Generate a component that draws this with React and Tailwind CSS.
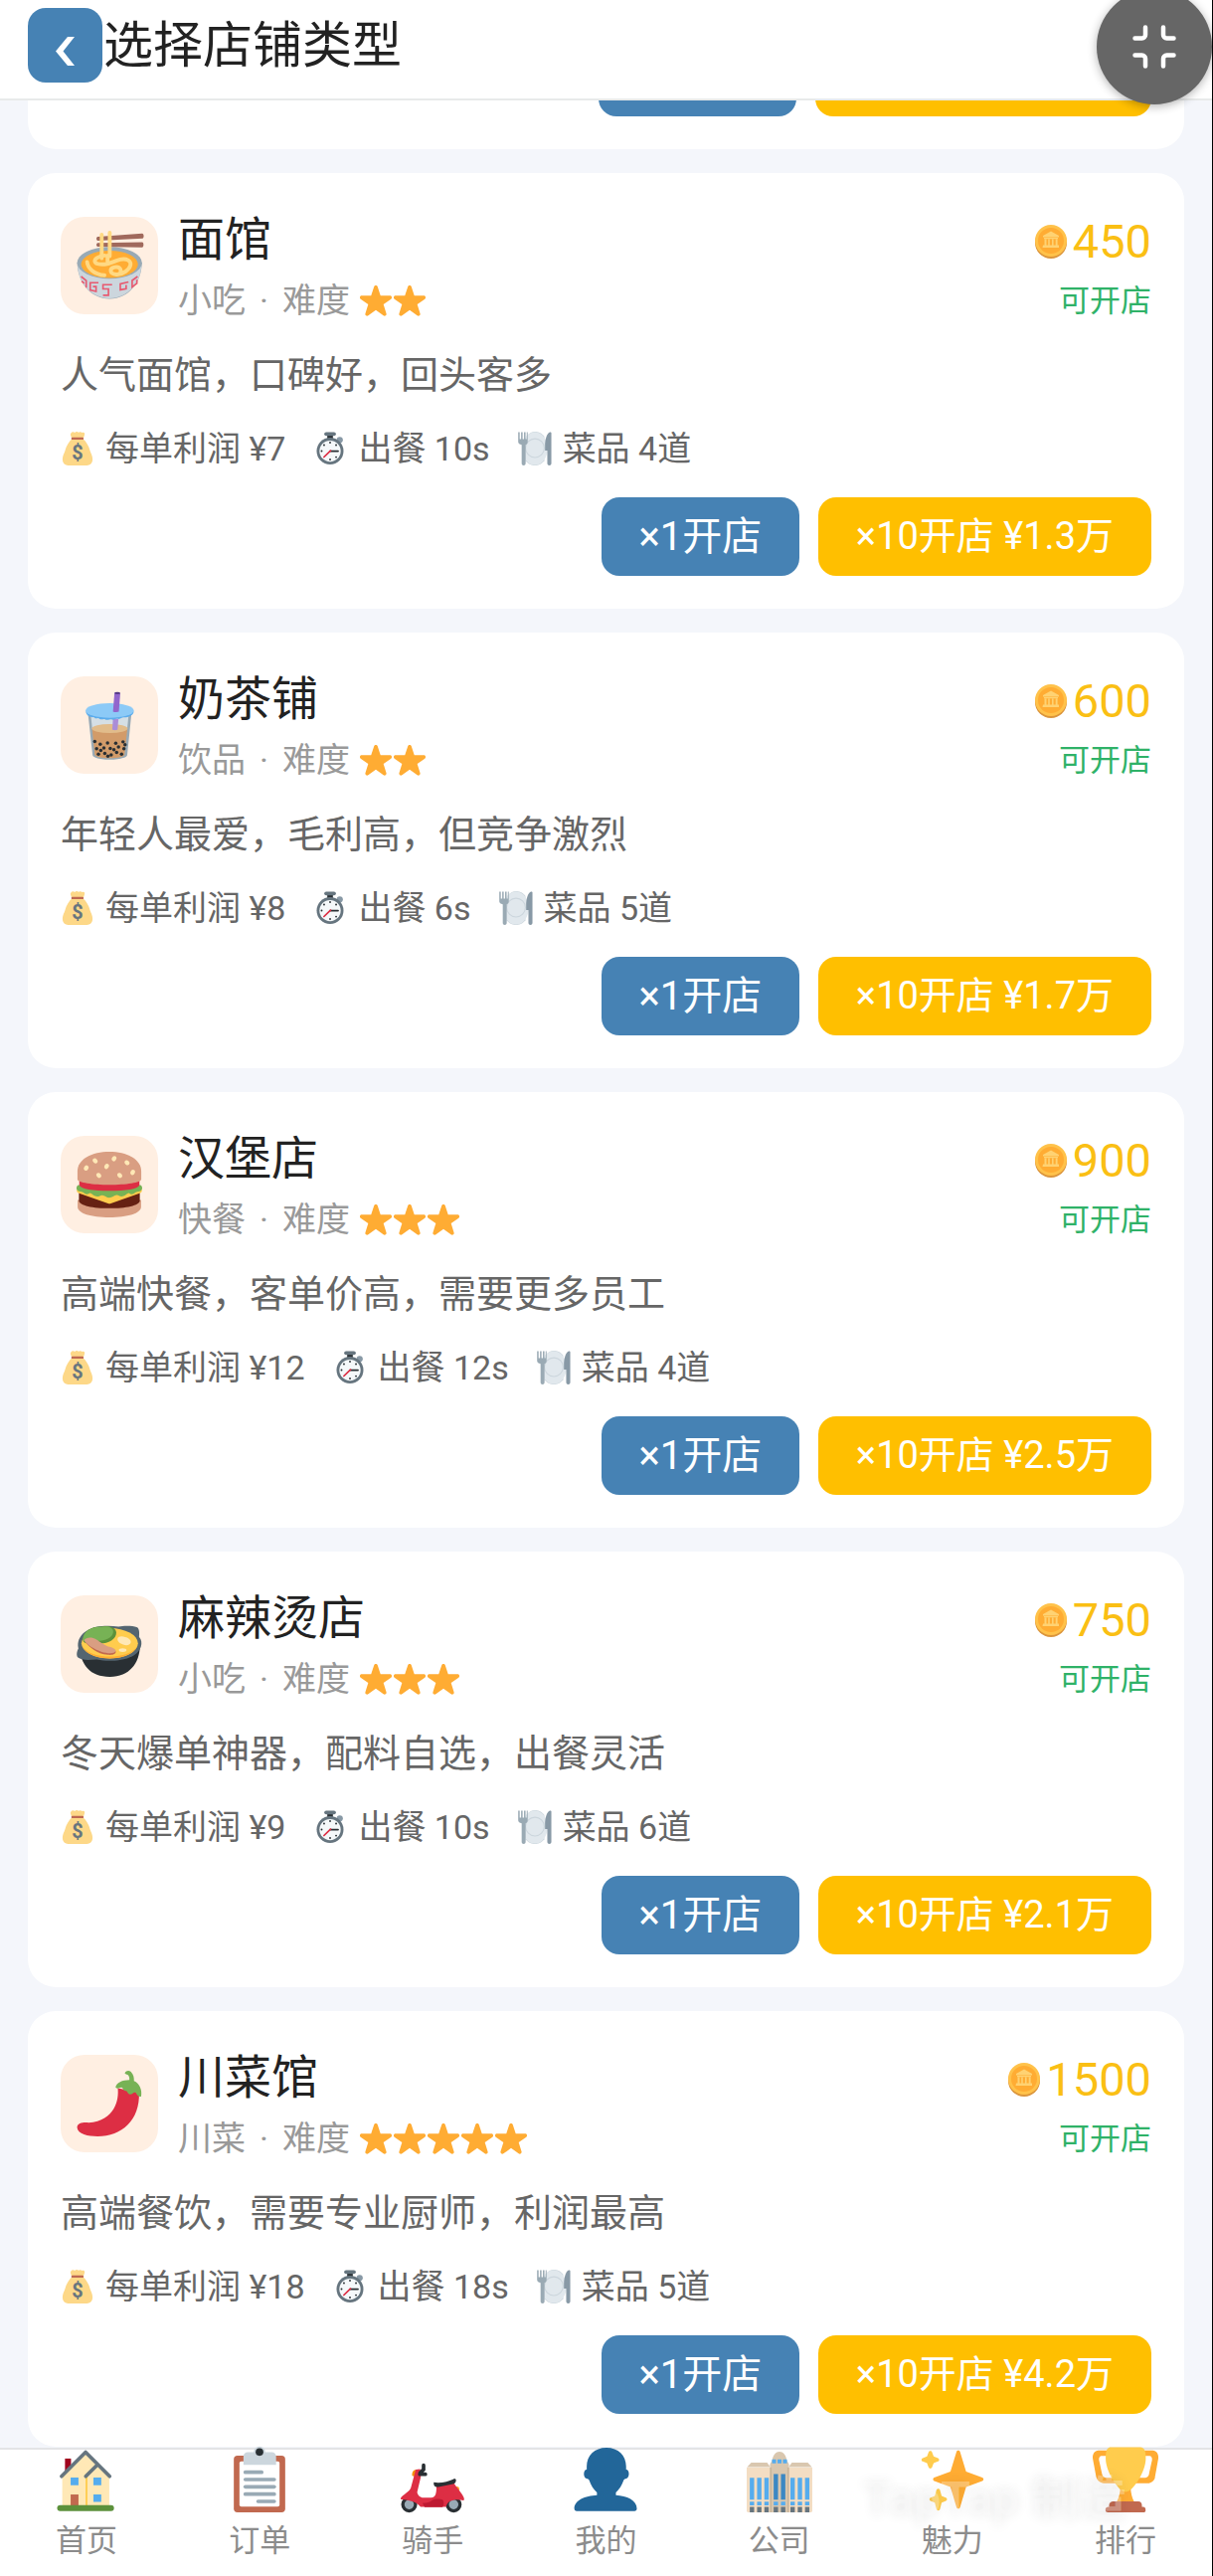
const shops = [
  { id: 'noodle', Icon: NoodleIcon, name: '面馆', type: '小吃', stars: 2, price: 450, desc: '人气面馆，口碑好，回头客多', profit: 7, time: 10, dishes: 4, bulk: '1.3' },
  { id: 'tea', Icon: TeaIcon, name: '奶茶铺', type: '饮品', stars: 2, price: 600, desc: '年轻人最爱，毛利高，但竞争激烈', profit: 8, time: 6, dishes: 5, bulk: '1.7' },
  { id: 'burger', Icon: BurgerIcon, name: '汉堡店', type: '快餐', stars: 3, price: 900, desc: '高端快餐，客单价高，需要更多员工', profit: 12, time: 12, dishes: 4, bulk: '2.5' },
  { id: 'malatang', Icon: PotIcon, name: '麻辣烫店', type: '小吃', stars: 3, price: 750, desc: '冬天爆单神器，配料自选，出餐灵活', profit: 9, time: 10, dishes: 6, bulk: '2.1' },
  { id: 'sichuan', Icon: ChiliIcon, name: '川菜馆', type: '川菜', stars: 5, price: 1500, desc: '高端餐饮，需要专业厨师，利润最高', profit: 18, time: 18, dishes: 5, bulk: '4.2' },
]

const tabs = [
  { label: '首页', Icon: HomeIcon },
  { label: '订单', Icon: ClipboardIcon },
  { label: '骑手', Icon: ScooterIcon },
  { label: '我的', Icon: PersonIcon },
  { label: '公司', Icon: OfficeIcon },
  { label: '魅力', Icon: SparklesIcon },
  { label: '排行', Icon: TrophyIcon },
]

function Emoji({ className, children }) {
  return (
    <svg viewBox="0 0 36 36" className={`shrink-0 overflow-visible ${className}`} aria-hidden="true">
      {children}
    </svg>
  )
}

function NoodleIcon() {
  return (
    <Emoji className="size-[66px]">
      <path fill="#99AAB5" d="M.4 16.5h35.4C35.800 27 28.500 36.300 18.100 36.300S.4 27 .4 16.500z" />
      <path fill="#CCD6DD" d="M.6 17.500h35C35.400 27.600 28 36 18.100 36S.8 27.600.6 17.500z" />
      <ellipse cx="18.100" cy="16.500" rx="17.800" ry="8.700" fill="#99AAB5" />
      <ellipse cx="18.100" cy="17.300" rx="15.600" ry="7.500" fill="#FFAC33" />
      <g fill="none" stroke="#E75A70" strokeWidth="0.9">
        <path d="M2.500 24l2.800 2.200v4M2.800 26.500l1.400 1.300M12 27.400H7.500v4l3.200.8V29.500H9M19.500 28.500h-5v2.300h3v3.500h-3M28.500 27l-4.500 1v3.300l3.200-.6v-2M33.500 24l-3 2.200v3.600l2.600-2v-2" />
      </g>
      <path fill="#A0695C" d="M11.600 2.200L36 .4c1 0 1.200 2.400.2 2.800L11.700 4.300c-1-.1-1-1.900-.1-2.100zM11.600 5.600L36 5.200c1 .1 1 2.700 0 2.900l-24.400-.5c-.9-.2-.9-1.800 0-2z" />
      <g fill="none" stroke="#FFD983" strokeLinecap="round" strokeLinejoin="round" strokeWidth="2.100">
        <path d="M13.800 1v13M18.200 0v12.800" />
        <path d="M15.500 12.500c-3 .3-5.500 1.500-5.500 3s2.500 2 5.500 1.800 5-1.800 8.500-2.600 6 .8 5.600 3-4 5.400-7.800 5.200-4-3.400-.8-4 3.800 2 2.800 3.600M5.800 16c.3 3.600 4 6.800 9.500 7.300M17 12.500v3" />
      </g>
    </Emoji>
  )
}

function TeaIcon() {
  const pearls = [
    [10, 27], [13, 28.5], [17, 27.800], [21.500, 28], [25.500, 27.200], [11, 31], [15, 30.500], [18.500, 30.800],
    [23, 30], [26, 31], [12, 34], [15.500, 33.500], [19, 34.400], [22, 33], [24.700, 34], [20.500, 31.500], [13.300, 31.900], [17.200, 35], [26.600, 28.800],
  ]
  return (
    <Emoji className="size-[66px]">
      <path fill="#99AAB5" d="M6.300 12h23.800l-2.300 22.500c0 1.200-4.200 2.500-9.600 2.500s-9.200-1.200-9.400-2.500z" />
      <path fill="#D5DFE5" d="M7.800 12h20.800l-.8 8H8.600z" />
      <path fill="#D29B69" d="M8.500 19.800h19.400l-1.600 14.400c0 1-3.600 2-8.100 2s-8-1-8.200-2z" />
      <ellipse cx="18.200" cy="19.900" rx="9.800" ry="2.500" fill="#E1BC8B" />
      <path fill="#AA8DD8" d="M20 14.500l3 .1-.5 5.900c-.5.5-2.400.4-2.900 0z" />
      <g fill="#292F33">
        {pearls.map(([x, y]) => (
          <circle key={`${x}-${y}`} cx={x} cy={y} r="0.950" />
        ))}
      </g>
      <path fill="#5DADEC" d="M5 10.500c.5 2.500 2.600 3.400 4.500 3.200.8 1.300 2 .2 2.700.6.900 1.200 2.400.2 3.200.4 1 1 2.600.2 3.700.2 1.200.6 2.400-.5 3.400-.4 1.300.6 2.200-.6 3.200-.7 2.200.2 5.500-.8 5.700-3.300z" />
      <ellipse cx="18.200" cy="10" rx="13.200" ry="4" fill="#8CCAF7" />
      <path fill="#9266CC" d="M20.800.3L24 .5l-.8 10.200c-.6.4-2.600.3-3.200-.1z" />
      <ellipse cx="22.400" cy=".5" rx="1.600" ry=".6" fill="#553986" />
    </Emoji>
  )
}

function BurgerIcon() {
  return (
    <Emoji className="size-[66px]">
      <path fill="#D99E82" d="M.6 26.500h34.800v3.800C35.400 33.800 28 36 18 36S.6 33.800.6 30.300z" />
      <path fill="#662113" d="M1.300 22h33.400v4.800C34.500 29.500 27 31 18 31S1.500 29.500 1.300 26.800z" />
      <path fill="#FFCC4D" d="M.4 20.500h35.200c.5.800.3 1.800-.6 2.200L18.800 28.400c-.5.200-1 .2-1.500 0L1 22.700c-.9-.4-1.100-1.400-.6-2.200z" />
      <path fill="#77B255" d="M1 18.300h34c1.400.6 1.300 2.800 0 3.300-1.300.5-2.200.3-3.300 1.200-1.100 1-2.200.5-3.100-.1-1.600.7-2.200 1.800-3.900 1.800-1.200 0-1.600-.8-2.700-.8-1.400 0-2.400 1.500-4 1.500s-2.500-1.400-3.900-1.400c-1.100 0-1.600.8-2.800.8-1.700 0-2.300-1.200-3.900-1.900-.9.600-2 1-3.100.1C3.200 21.900 2.300 22.100 1 21.600c-1.300-.5-1.400-2.700 0-3.300z" />
      <path fill="#DD2E44" d="M1.500 15h33v3.400C33.500 20.500 27 21.400 18 21.400S2.500 20.500 1.500 18.400z" />
      <path fill="#D99E82" d="M18 0C8.500 0 .5 4 .5 10.800v4.400C.5 17 9 18.200 18 18.200S35.500 17 35.500 15.200v-4.400C35.500 4 27.500 0 18 0z" />
      <g fill="#FFE8B6">
        <ellipse cx="5.300" cy="8.900" rx="1.200" ry="1.500" transform="rotate(30 5.300 8.900)" />
        <ellipse cx="10.200" cy="5" rx="1.200" ry="1.500" transform="rotate(-40 10.200 5)" />
        <ellipse cx="20.600" cy="3.800" rx="1.200" ry="1.500" transform="rotate(30 20.600 3.800)" />
        <ellipse cx="16.500" cy="8" rx="1.200" ry="1.500" transform="rotate(25 16.500 8)" />
        <ellipse cx="27.700" cy="6" rx="1.200" ry="1.500" transform="rotate(-50 27.700 6)" />
        <ellipse cx="12.200" cy="13" rx="1.200" ry="1.500" transform="rotate(-35 12.200 13)" />
        <ellipse cx="23.700" cy="13" rx="1.200" ry="1.500" transform="rotate(-35 23.700 13)" />
        <ellipse cx="30.800" cy="11.300" rx="1.200" ry="1.500" transform="rotate(25 30.800 11.300)" />
      </g>
    </Emoji>
  )
}

function PotIcon() {
  return (
    <Emoji className="size-[66px]">
      <path fill="#292F33" d="M1.300 19h33.500C34.600 28.500 29 36 18.200 36S2.300 29.500 1.300 19z" />
      <path fill="#546570" d="M23 8.500c3-.7 8-.5 10 .2 1.600.6 1.500 3.500 1.300 5.300 1.400 1.400 1.600 3.500 1 5.500C33.500 25 26 27.200 18 27.200c-2.500 0-4.500-.3-7-.8C7 26.800 2.500 27 .8 25.400c-1.200-1.200-.5-3.900.2-5C-.5 13 7 8.300 15.500 8.100c2.700-.1 5 0 7.500.4z" />
      <ellipse cx="18.200" cy="17.600" rx="15.500" ry="8.300" fill="#FFCC4D" />
      <path fill="#FFAC33" d="M3 18.900c1.500 4.300 8 7 15.200 7s13.700-2.700 15.200-7c-2 3.700-8.200 5.900-15.200 5.900S5 22.600 3 18.900z" />
      <path fill="#5C913B" d="M3.500 15.500C3.500 10.500 9 8 14 8.500c4-.9 7.700.6 7.800 3.200.1 3.500-4.300 6-8.800 6-4 0-9.500.8-9.500-2.200z" />
      <path fill="#77B255" d="M3.500 15.500C3.300 11.200 8.500 8.300 13.700 8.600c4-.6 6.600.4 6.400 2.800-.3 3-4.300 4.800-8.600 4.800-3.500 0-7 1.400-8-.7z" />
      <path fill="#C1694F" d="M4.400 16.500c3 3.500 6.600 6.900 12.700 7.400 2.900.3 5-.5 4.300-2.200z" />
      <path fill="#D99E82" d="M4.100 16c1.100-1.800 4.400-1.900 6.600-.6 2.600 1.500 4.200 3.300 8 4.300 2 .6 3 1.400 2.700 2.300-.7 1.500-4.600 1.200-7.800.2C9.400 20.800 5.800 18.500 4.100 16z" />
      <path fill="#FFE8B6" d="M22.500 15c.3-1.400 2.600-1.500 4.100-.8 2 .4 3.600 1.700 3.100 3.100-.5 1.300-2.300 1.800-4.100 1-1.700-.6-3.400-1.800-3.100-3.300z" />
      <ellipse cx="25.300" cy="21.300" rx="2.100" ry="1" fill="#FFE8B6" />
    </Emoji>
  )
}

function ChiliIcon() {
  return (
    <Emoji className="size-[66px]">
      <path fill="#DD2E44" d="M22.600 9.500c.8 6-1.300 17.800-16 19-3-.3-6.200.2-6.300 2.600.2 3.600 6.200 4.900 11.200 4.900C25 36 34.800 27 34.300 12z" />
      <path fill="#77B255" d="M26.500 1.200c.6-1.300 2.300-1.600 3.300-.6 1.500 1.500 1.800 3.400 1.700 5 3 1.200 4.700 5 3.900 8.600-1.500.3-2.300-1-3-2.300-1.200-.5-1.700 1.100-3 1-1.400-.1-1.200-1.500-2.300-1.900-1.600.3-1.300-1.500-2.500-1.800-1.600.5-2.500.8-3.200-.1C21.800 6.500 25.200 5 29 5c.1-1.300-.3-2.400-1-2.800-.6-.3-1.600-.4-1.500-1z" />
    </Emoji>
  )
}

function Star() {
  return (
    <Emoji className="size-[34px]">
      <path
        fill="#FFAC33"
        d="M27.287 34.627c-.404 0-.806-.124-1.152-.371L18 28.422l-8.135 5.834c-.343.247-.743.371-1.147.371-.406 0-.813-.126-1.157-.376-.689-.5-.979-1.386-.719-2.194l3.034-9.792-8.062-5.681c-.685-.505-.97-1.393-.708-2.199.264-.809 1.016-1.357 1.866-1.363L12.947 13l3.179-9.549c.268-.809 1.023-1.353 1.874-1.353.851 0 1.606.545 1.875 1.353L23 13l10.036.015c.853.006 1.606.556 1.867 1.363.263.81-.022 1.694-.708 2.200l-8.062 5.681 3.034 9.792c.26.809-.033 1.695-.723 2.194-.344.253-.75.376-1.157.376z"
      />
    </Emoji>
  )
}

function MoneyBagIcon() {
  return (
    <Emoji className="size-[34px]">
      <path fill="#FDD888" d="M11 1.500C12 0 14 .2 15 1c1-1.200 3-1.200 4-.1 1-1 3-.9 3.800.2 1.500-.9 3.400.2 2.700 2L24 8c3 2.500 6 7 7.500 13 .5 1.500 2.500 5 2.500 8.500 0 4.500-3 6.500-6 6.500H8c-3 0-6-2-6-6.500C2 26 4 22.500 4.500 21 6 15 9 10.500 12 8l-1.500-4.500c-.2-.8 0-1.500.5-2z" />
      <rect x="11.300" y="6" width="13.200" height="2.600" rx="1.300" fill="#BF6952" />
      <text x="18" y="30" textAnchor="middle" fontSize="21" fontWeight="700" fill="#67757F" fontFamily="Roboto, sans-serif">$</text>
    </Emoji>
  )
}

function StopwatchIcon() {
  return (
    <Emoji className="size-[34px]">
      <path fill="#292F33" d="M15 3h6v5h-6z" />
      <rect x="11.800" y=".5" width="12.400" height="4" rx="2" fill="#66757F" />
      <circle cx="28.300" cy="8.800" r="3.300" fill="#8899A6" />
      <circle cx="18" cy="20.700" r="14.300" fill="#66757F" />
      <circle cx="18" cy="20.700" r="11.300" fill="#F5F8FA" />
      <g fill="#292F33">
        <circle cx="18" cy="11.700" r="1" />
        <circle cx="18" cy="29.700" r="1" />
        <circle cx="9" cy="20.700" r="1" />
        <circle cx="11.600" cy="14.300" r="1" />
        <circle cx="24.400" cy="14.300" r="1" />
        <circle cx="24.400" cy="27.100" r="1" />
      </g>
      <path stroke="#292F33" strokeWidth="1.800" strokeLinecap="round" d="M18 20.700h8.500" />
      <path stroke="#DD2E44" strokeWidth="1.800" strokeLinecap="round" d="M18.500 20.200L11.500 27" />
    </Emoji>
  )
}

function PlateIcon() {
  return (
    <Emoji className="size-[34px]">
      <path fill="#CCD6DD" d="M9 5C12 1 15 0 18 0s7 1 10 5v26c-3 4-7 5-10 5s-7-1-10-5z" />
      <ellipse cx="18" cy="18" rx="13.500" ry="17.500" fill="#E1E8ED" />
      <circle cx="18" cy="17.500" r="10" fill="none" stroke="#CCD6DD" strokeWidth="1.200" />
      <path fill="#9AAAB4" d="M.2.5h1.600V8h1.500V.5h1.600V8h1.500V.5H8V8h1.300V.5h1v10.300c0 1.700-1 2.700-2.200 3.200V34c0 2.700-4.200 2.700-4.200 0V14C1.700 13.500.2 12.500.2 10.800z" />
      <path fill="#8899A6" d="M35.500 1.500V34c0 2.700-4.300 2.700-4.300 0V20h-2.400V15C28.800 8 31 1 34 .5c.9-.1 1.500.2 1.500 1z" />
    </Emoji>
  )
}

function CoinIcon() {
  return (
    <svg viewBox="0 0 32 34" className="h-[34px] w-8 shrink-0" aria-hidden="true">
      <ellipse cx="16" cy="18" rx="16" ry="16" fill="#DB953C" />
      <circle cx="16" cy="16" r="16" fill="#FFC24A" />
      <circle cx="16" cy="16" r="13" fill="#FFAC33" />
      <g fill="#FFD272">
        <path d="M16 6.500l8 4.500v1.500H8V11zM9 13h14v1.200H9zM9.500 14.500h2v6h-2zM13.200 14.500h1.600v6h-1.600zM17 14.500h1.600v6H17zM20.700 14.500h1.900v6h-1.900zM8 20.500h16V23H7.500z" />
      </g>
    </svg>
  )
}

function HomeIcon() {
  return (
    <Emoji className="size-[66px]">
      <path fill="#A0041E" d="M6.200 6.500h3.300v8H6.200z" />
      <path fill="#FFE8B6" d="M17.500 2.500L4.700 15.500V33h25.800V15.500z" />
      <path fill="#FFCC4D" d="M17.500 16h1v17h-1z" />
      <path fill="#55ACEE" d="M9.300 16.900h4.300v4.300H9.300zM21.800 16.900h4.300v4.300h-4.300zM21.800 26.200h4.300v4.100h-4.300z" />
      <path fill="#C1694F" d="M9.300 26.200h4.300V33H9.300z" />
      <path fill="none" stroke="#66757F" strokeWidth="2" strokeLinecap="round" strokeLinejoin="round" d="M4.300 16.200L17.500 3l13.200 13.200M24.100 9.800l-6.500 6.400" />
      <rect x="1.900" y="32" width="31.200" height="3.300" rx="1.650" fill="#5C913B" />
    </Emoji>
  )
}

function ClipboardIcon() {
  return (
    <Emoji className="size-[66px]">
      <rect x="3.900" y="4.900" width="28.200" height="31.100" rx="2" fill="#C1694F" />
      <rect x="7" y="8" width="22" height="24.800" rx="1" fill="#FFF" />
      <circle cx="18" cy="2.900" r="3.100" fill="#CCD6DD" />
      <path fill="#CCD6DD" d="M11.500 3h13.300c1.300 0 2.300 1 2.300 2.300V10H9.200V5.300C9.200 4 10.200 3 11.500 3z" />
      <circle cx="18" cy="2.900" r="2.100" fill="#292F33" />
      <g fill="#99AAB5">
        <rect x="9.200" y="13" width="11" height="2" rx="1" />
        <rect x="9.200" y="17" width="17.900" height="2" rx="1" />
        <rect x="9.200" y="21" width="17.900" height="2" rx="1" />
        <rect x="9.200" y="25" width="17.900" height="2" rx="1" />
        <rect x="16.200" y="29" width="10.900" height="2" rx="1" />
      </g>
    </Emoji>
  )
}

function ScooterIcon() {
  return (
    <Emoji className="size-[66px]">
      <g fill="#99AAB5" stroke="#292F33" strokeWidth="1.800">
        <circle cx="5.200" cy="31.700" r="3.500" />
        <circle cx="29.600" cy="31.700" r="3.500" />
      </g>
      <path fill="#F4900C" d="M8.800 12.500c-1.500.2-2.200 1.500-2 3.500l1.800.4z" />
      <path fill="#FFAC33" d="M29.500 21.800h2.300c1.300.4 1.200 2.200.2 2.700h-2.500z" />
      <path fill="#DD2E44" d="M8.800 12.600l2.400-.3c.4 1.700.6 3 .2 5L9.600 25c.3 1.700 1.600 3 3.400 3h4.200c2.700-.1 3.100-3.100 2.900-6.600l9.600-1.500c1.600 2.600 4.600 5.600 5.500 8.100.3.900.2 1.500-.3 1.500-3.900-1-8.400-.7-9.500 3.500H11.500c-2-2.500-5.500-3.700-10.900-4.100-.7-2 4.200-3.300 5.500-6.300z" />
      <path fill="#BE1931" d="M12.500 31c2.500-.2 4-.5 5.200-1.600 1.500-1 4.500-.9 5.800-.3.900.9.900 2.900 0 4H13.700z" />
      <path fill="#292F33" d="M18.700 19.500c3.500.7 8-.4 10.700-1.700.9-.4 1.600-.1 1.500.8-.1 1.100-.5 1.600-1.600 1.800l-8.100 1.700c-1.900.3-2.800-.7-2.500-2.600z" />
      <path fill="none" stroke="#292F33" strokeWidth="2" strokeLinecap="round" d="M13.100 10.200v2.300l-1.900 1.900M11 15.100h3.100" />
    </Emoji>
  )
}

function PersonIcon() {
  return (
    <Emoji className="size-[66px]">
      <path fill="#269" d="M18.500.5C25 .5 29.300 4.800 29.300 10.800v1.700c1.800-.2 2.200 4.100.2 4.900-.8.200-1.200.3-1.500.9-1 2.900-2.500 5.200-4.300 6.800v1.500c6 .3 11.500 2.700 11.500 7.400 0 .9-.5 1.300-1.300 1.300H2.200c-.8 0-1.300-.4-1.300-1.300 0-4.700 5.900-7.100 12.400-7.400v-1.500c-1.800-1.600-3.300-3.900-4.300-6.800-.3-.6-.7-.7-1.500-.9-2-.8-1.600-5.100.2-4.900v-1.700C7.700 4.800 12 .5 18.500.5z" />
    </Emoji>
  )
}

function OfficeIcon() {
  const columns = [1.7, 5.7, 9.7, 24, 28, 32]
  return (
    <Emoji className="size-[66px]">
      <path fill="#F3DDC3" d="M0 11.500h36V35c0 .6-.4 1-1 1H1c-.6 0-1-.4-1-1z" />
      <path fill="#D9C7AF" d="M2.500 8.700h8.700l1.800 2.500H.2zM24.800 8.700h8.700l2.300 2.500H23z" />
      <path fill="#D9C7AF" d="M12.800 9.500l1.200-2C14.500 4.500 16 2.700 18 2.700s3.500 1.800 4 4.800l1.200 2V36H12.800z" />
      <path fill="#C9B69C" d="M12.800 11.500h.9V36h-.9zM22.300 11.500h.9V36h-.9z" />
      <g fill="#55ACEE">
        <path d="M13.900 7h2.200v2.200h-2.200zM16.900 7h2.200v2.200h-2.200zM19.900 7h2.200v2.200h-2.200z" />
        {columns.map((x) => (
          <path key={x} d={`M${x} 17h2.400v12H${x}zM${x} 30.200h2.400v2H${x}z`} />
        ))}
        <path d="M14.800 30.200h2.400v2h-2.400zM18.800 30.200h2.400v2h-2.400z" />
      </g>
      <path fill="#3B88C3" d="M14.800 15h2.400v14h-2.400zM18.800 15h2.400v14h-2.400z" />
      <g fill="#66757F">
        {columns.map((x) => (
          <path key={x} d={`M${x} 33h2.400v3H${x}z`} />
        ))}
        <path d="M14.800 33h2.400v3h-2.400zM18.800 33h2.400v3h-2.400z" />
      </g>
    </Emoji>
  )
}

function SparklesIcon() {
  return (
    <Emoji className="size-[66px]">
      <path
        fill="#FFAC33"
        d="M34.347 16.893l-8.899-3.294-3.323-10.891c-.128-.42-.517-.708-.956-.708-.439 0-.828.288-.956.708l-3.322 10.891-8.900 3.294c-.393.146-.653.519-.653.938 0 .418.26.793.653.938l8.895 3.293 3.324 11.223c.126.424.516.715.959.715.442 0 .833-.291.959-.716l3.324-11.223 8.896-3.293c.391-.144.652-.518.652-.937 0-.418-.261-.792-.653-.938z"
      />
      <path
        fill="#FFCC4D"
        d="M14.347 27.894l-2.314-.856-.9-3.300c-.118-.436-.513-.738-.964-.738-.451 0-.846.302-.965.737l-.9 3.300-2.313.856c-.393.146-.653.52-.653.938 0 .418.26.792.653.938l2.301.853.907 3.622c.112.444.511.756.97.756.459 0 .858-.312.97-.757l.907-3.622 2.301-.853c.393-.144.653-.518.653-.936 0-.418-.26-.792-.653-.938zM10.009 6.231l-2.364-.875-.876-2.365c-.145-.393-.519-.653-.938-.653-.418 0-.792.26-.938.653l-.875 2.365-2.365.875c-.393.146-.653.52-.653.938 0 .418.26.792.653.938l2.365.875.875 2.365c.146.393.52.653.938.653.418 0 .792-.26.938-.653l.875-2.365 2.365-.875c.393-.146.653-.52.653-.938 0-.418-.26-.792-.653-.938z"
      />
    </Emoji>
  )
}

function TrophyIcon() {
  return (
    <Emoji className="size-[66px]">
      <path
        fill="#FFAC33"
        d="M5.123 5h6C12.227 5 13 4.896 13 6V4c0-1.104-.773-2-1.877-2h-8c-2 0-3.583 2.125-3 5 0 0 1.791 9.375 1.917 9.958C2.373 18.500 4.164 20 6.081 20h6.958c1.105 0-.039-1.896-.039-3v-2c0 1.104-.773 2-1.877 2h-4c-1.104 0-1.833-1.042-2-2S3.539 7.667 3.539 7.667C3.206 5.750 4.018 5 5.123 5zm25.812 0h-6C23.831 5 22 4.896 22 6V4c0-1.104 1.831-2 2.935-2h8c2 0 3.584 2.125 3 5 0 0-1.633 9.419-1.771 10-.354 1.500-2.042 3-4 3h-7.146C21.914 20 22 18.104 22 17v-2c0 1.104 1.831 2 2.935 2h4c1.104 0 1.834-1.042 2-2s1.584-7.333 1.584-7.333C32.851 5.750 32.040 5 30.935 5zM20.832 22c0-6.958-2.709 0-2.709 0s-3-6.958-3 0-3.291 10-3.291 10h12.292c-.001 0-3.292-3.042-3.292-10z"
      />
      <path
        fill="#FFCC4D"
        d="M29.123 6.577c0 6.775-6.770 18.192-11 18.192-4.231 0-11-11.417-11-18.192 0-5.195 1-6.319 3-6.319 1.374 0 6.025-.027 8-.027l7-.001c2.917-.001 4 .684 4 6.347z"
      />
      <path
        fill="#C1694F"
        d="M27 33c0 1.104.227 2-.877 2h-16C9.018 35 9 34.104 9 33v-1c0-1.104 1.164-2 2.206-2h13.917c1.042 0 1.877.896 1.877 2v1zM29 34.625c0 .76.165 1.375-1.252 1.375H8.498C7.206 36 7 35.385 7 34.625v-.25C7 33.615 7.738 33 8.498 33h19.250c.759 0 1.252.615 1.252 1.375v.25z"
      />
    </Emoji>
  )
}

function Stat({ icon, children }) {
  return (
    <li className="flex items-center gap-[11px]">
      {icon}
      <span>{children}</span>
    </li>
  )
}

function ShopCard({ shop }) {
  const { Icon } = shop
  return (
    <article className="shrink-0 rounded-[28px] bg-white p-[33px]">
      <div className="flex items-start">
        <div className="mt-[11px] flex size-[98px] shrink-0 items-center justify-center rounded-3xl bg-[#ffefe2]">
          <Icon />
        </div>
        <div className="ml-5 min-w-0 flex-1 pt-1">
          <h2 className="text-[47px] leading-[60px] text-[#222]">{shop.name}</h2>
          <p className="flex items-center text-[34px] leading-[62px] text-[#999]">
            <span>{shop.type}</span>
            <span className="mx-[14px]">·</span>
            <span className="mr-[9px]">难度</span>
            {Array.from({ length: shop.stars }, (_, i) => (
              <Star key={i} />
            ))}
          </p>
        </div>
        <div className="pt-[6px] text-right">
          <p className="flex items-center justify-end gap-[6px] text-[47px] leading-[60px] text-[#fabf14]">
            <CoinIcon />
            {shop.price}
          </p>
          <p className="text-[31px] leading-[60px] text-[#2fb268]">可开店</p>
        </div>
      </div>
      <p className="mt-[14px] text-[38px] leading-[60px] text-[#666]">{shop.desc}</p>
      <ul className="mt-[14px] mb-[19px] flex gap-7 text-[34px] leading-[60px] text-[#666]">
        <Stat icon={<MoneyBagIcon />}>每单利润 ¥{shop.profit}</Stat>
        <Stat icon={<StopwatchIcon />}>出餐 {shop.time}s</Stat>
        <Stat icon={<PlateIcon />}>菜品 {shop.dishes}道</Stat>
      </ul>
      <div className="flex justify-end gap-[19px]">
        <button type="button" className="h-[79px] w-[199px] rounded-[18px] bg-[#4682b4] text-[40px] text-white">
          ×1开店
        </button>
        <button type="button" className="h-[79px] rounded-[18px] bg-[#ffbf00] px-[38px] text-[38px] text-white">
          ×10开店 ¥{shop.bulk}万
        </button>
      </div>
    </article>
  )
}

export default function App() {
  return (
    <div className="relative flex h-screen flex-col overflow-hidden border-r border-black bg-[#f4f6fb] font-[Roboto,'Noto_Sans_CJK_SC',sans-serif]">
      <header className="flex shrink-0 items-center gap-px border-b-2 border-[#e8eaea] bg-white px-7 pt-[7px] pb-[15px]">
        <button type="button" aria-label="返回" className="flex size-[75px] items-center justify-center rounded-[18px] bg-[#4682b4] pt-3">
          <svg viewBox="0 0 19 29" className="h-[29px] w-[19px]" aria-hidden="true">
            <path fill="#fff" d="M12 0h7L7.500 14.500 19 29h-7L0 14.500z" />
          </svg>
        </button>
        <h1 className="pt-[2px] text-[50px] leading-[75px] text-[#222]">选择店铺类型</h1>
      </header>

      <button
        type="button"
        aria-label="退出全屏"
        className="absolute -top-[11px] right-0 z-10 flex size-[116px] items-center justify-center rounded-full bg-[#666] shadow-[0_2px_10px_rgba(0,0,0,0.3)]"
      >
        <svg viewBox="0 0 44 44" className="size-11" fill="none" stroke="#fff" strokeWidth="4.500" strokeLinecap="round" aria-hidden="true">
          <path d="M13 2.500V10a3.500 3.500 0 0 1-3.500 3.500h-7M31 2.500V10a3.500 3.500 0 0 0 3.500 3.500h7M2.500 30.500h7A3.500 3.500 0 0 1 13 34v7.500M41.500 30.500h-7A3.500 3.500 0 0 0 31 34v7.500" />
        </svg>
      </button>

      {/* list is scrolled to its end, so the first card is cut by the header */}
      <main className="flex min-h-0 flex-1 flex-col justify-end gap-6 overflow-hidden px-7 pb-px">
        <article className="flex shrink-0 justify-end gap-[19px] rounded-b-[28px] bg-white px-[33px] pb-[33px]">
          <button type="button" aria-label="×1开店" className="h-[79px] w-[199px] rounded-[18px] bg-[#4682b4]" />
          <button type="button" aria-label="×10开店" className="h-[79px] w-[338px] rounded-[18px] bg-[#ffbf00]" />
        </article>
        {shops.map((shop) => (
          <ShopCard key={shop.id} shop={shop} />
        ))}
      </main>

      <nav className="relative h-[129px] shrink-0 border-t-2 border-[#e3e4e6] bg-white">
        <ul className="-mt-[3px] grid grid-cols-7">
          {tabs.map(({ label, Icon }) => (
            <li key={label}>
              <a href="#" className="flex flex-col items-center gap-2 text-[31px] leading-[42px] text-[#8c8c8c]">
                <Icon />
                {label}
              </a>
            </li>
          ))}
        </ul>
        <span className="pointer-events-none absolute top-7 right-[86px] text-[48px] leading-[44px] font-bold text-white/30 [text-shadow:0_0_12px_rgba(0,0,0,0.08)]">
          TapTap 制造
        </span>
      </nav>
    </div>
  )
}
